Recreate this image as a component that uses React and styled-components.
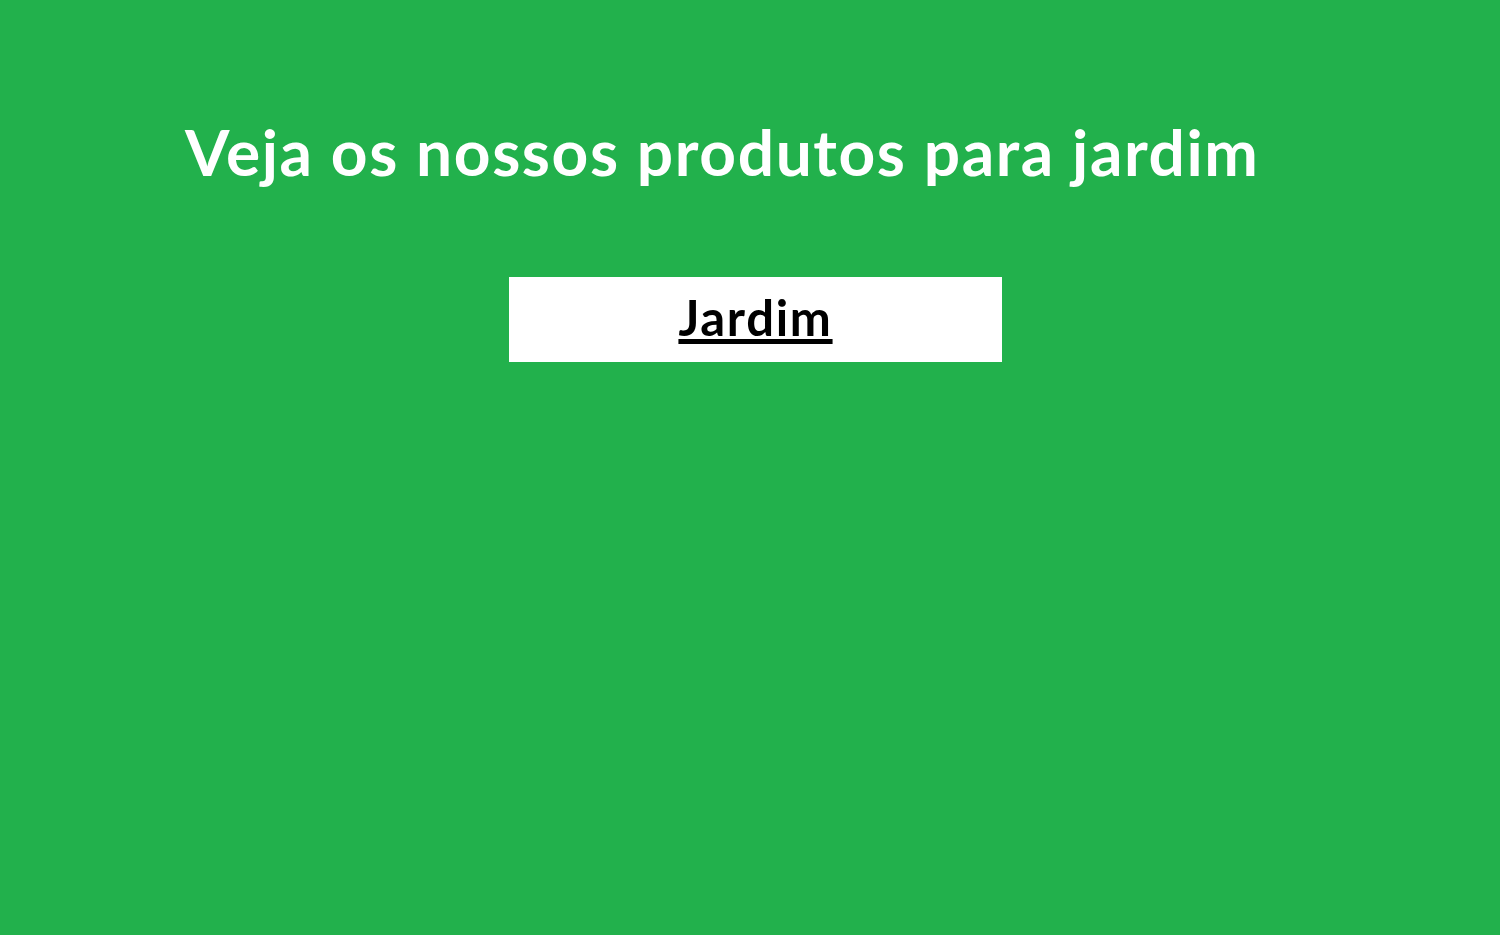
import React from 'react';
import styled, { createGlobalStyle } from 'styled-components';

const GlobalStyle = createGlobalStyle`
  html, body {
    margin: 0;
    padding: 0;
    background: #22b14c;
  }
`;

const Page = styled.div`
  min-height: 935px;
  background: #22b14c;
  font-family: Lato, "Open Sans", sans-serif;
  padding-top: 112px;
  box-sizing: border-box;
`;

const Title = styled.h1`
  margin: 0 0 0 185px;
  color: #ffffff;
  font-size: 64px;
  font-weight: 700;
  line-height: 80px;
  letter-spacing: 1.6px;
`;

const Nav = styled.div`
  display: flex;
  margin-top: 85px;
  padding-left: 509px;
`;

const Card = styled.a`
  display: flex;
  align-items: center;
  justify-content: center;
  box-sizing: border-box;
  width: 493px;
  height: 85px;
  padding-bottom: 6px;
  background: #ffffff;
  color: #000000;
  font-size: 49px;
  font-weight: 700;
  letter-spacing: 1.7px;
  text-decoration: underline;
  text-decoration-thickness: 5px;
  text-underline-offset: 3px;
`;

const App = () => {
  return (
    <Page>
      <GlobalStyle />
      <Title>Veja os nossos produtos para jardim</Title>
      <Nav>
        <Card href="#">Jardim</Card>
      </Nav>
    </Page>
  );
};

export default App;
